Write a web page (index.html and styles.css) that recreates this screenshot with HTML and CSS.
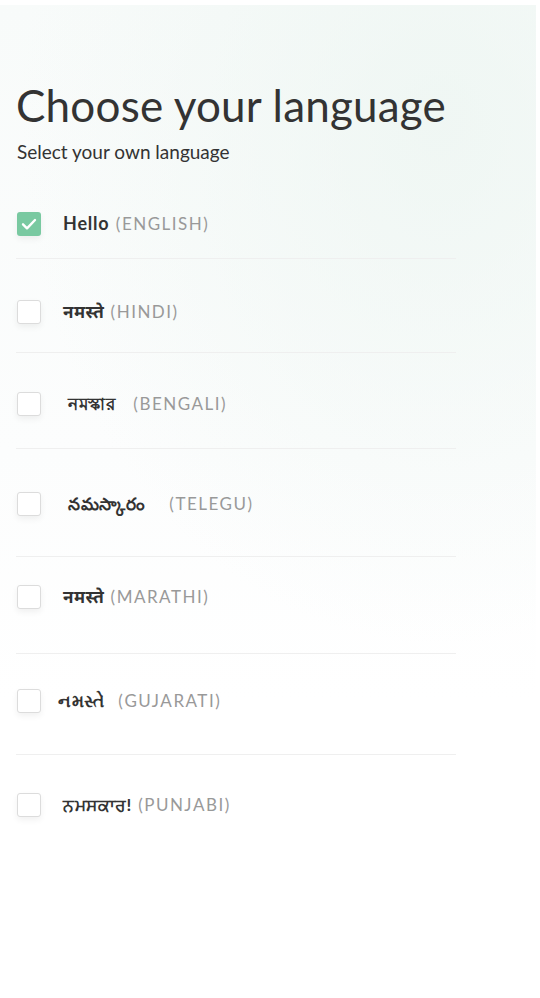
FILE: index.html
```html
<!DOCTYPE html>
<html lang="en">
<head>
<meta charset="utf-8">
<title>Choose your language</title>
<link rel="stylesheet" href="styles.css">
</head>
<body>
<main class="screen">
  <h1 class="title">Choose your language</h1>
  <p class="subtitle">Select your own language</p>
  <ul class="langs">
    <li class="lang r1">
      <span class="box checked"><svg viewBox="0 0 24 24" width="24" height="24"><path d="M6 12.3l4 4 8-8.3" fill="none" stroke="#fff" stroke-width="2.4" stroke-linecap="round" stroke-linejoin="round"/></svg></span>
      <span class="text"><span class="native latin">Hello</span> <span class="label">(ENGLISH)</span></span>
    </li>
    <li class="lang r2">
      <span class="box"></span>
      <span class="text"><span class="native">नमस्ते</span> <span class="label">(HINDI)</span></span>
    </li>
    <li class="lang r3">
      <span class="box"></span>
      <span class="text shift5"><span class="native">নমস্কার</span> <span class="label gap2">(BENGALI)</span></span>
    </li>
    <li class="lang r4">
      <span class="box"></span>
      <span class="text shift5"><span class="native">నమస్కారం</span> <span class="label gap3">(TELEGU)</span></span>
    </li>
    <li class="lang r5">
      <span class="box"></span>
      <span class="text"><span class="native">नमस्ते</span> <span class="label">(MARATHI)</span></span>
    </li>
    <li class="lang r6">
      <span class="box"></span>
      <span class="text shiftm5"><span class="native">નમસ્તે</span> <span class="label gap4">(GUJARATI)</span></span>
    </li>
    <li class="lang r7">
      <span class="box"></span>
      <span class="text"><span class="native">ਨਮਸਕਾਰ!</span> <span class="label">(PUNJABI)</span></span>
    </li>
  </ul>
</main>
</body>
</html>
```
FILE: styles.css
```css
* { box-sizing: border-box; }
html, body { margin: 0; padding: 0; }
body {
  width: 540px;
  height: 998px;
  background: #fff;
  font-family: "Lato", "Noto Sans", "DejaVu Sans", sans-serif;
  color: #333;
  overflow: hidden;
}
.screen {
  margin-top: 5px;
  width: 536px;
  min-height: 993px;
  padding: 0 16px;
  background:
    radial-gradient(ellipse 420px 520px at 440px 120px, rgba(236,245,241,0.75), rgba(255,255,255,0) 100%),
    linear-gradient(180deg, #f8fbfa 0%, #fcfdfd 45%, #ffffff 70%);
}
.title {
  margin: 0;
  padding-top: 73px;
  font-size: 44px;
  font-weight: 400;
  line-height: 54px;
  color: #333;
  letter-spacing: 0.2px;
}
.subtitle {
  margin: 9px 0 0 1px;
  font-size: 19px;
  line-height: 22px;
  color: #333;
}
.langs {
  list-style: none;
  margin: 0;
  padding: 0;
  width: 440px;
  margin-top: 26px;
}
.lang {
  display: flex;
  align-items: center;
  gap: 22px;
  border-bottom: 1px solid #efefef;
  padding-left: 1px;
}
.lang.r7 { border-bottom: none; }
.r1 { padding-top: 22px; padding-bottom: 22px; }
.r2 { padding-top: 41px; padding-bottom: 28px; }
.r3 { padding-top: 39px; padding-bottom: 32px; }
.r4 { padding-top: 43px; padding-bottom: 40px; }
.r5 { padding-top: 28px; padding-bottom: 44px; }
.r6 { padding-top: 35px; padding-bottom: 41px; }
.r7 { padding-top: 38px; }
.box {
  flex: 0 0 24px;
  width: 24px;
  height: 24px;
  border: 1px solid #dcdcdc;
  border-radius: 3px;
  background: #fff;
  box-shadow: 0 3px 6px rgba(0,0,0,0.06);
  display: flex;
}
.box.checked {
  border: none;
  background: #79c9a1;
}
.text {
  font-size: 17px;
  line-height: 24px;
  white-space: nowrap;
}
.shift5 { margin-left: 5px; }
.shiftm5 { margin-left: -5px; }
.native {
  font-weight: 700;
  color: #333;
  letter-spacing: 0.5px;
}
.native.latin {
  font-size: 18px;
  letter-spacing: 0.8px;
}
.label {
  color: #999;
  letter-spacing: 1.5px;
  margin-left: 2px;
}
.gap2 { margin-left: 14px; }
.gap3 { margin-left: 20px; }
.gap4 { margin-left: 10px; }
```
